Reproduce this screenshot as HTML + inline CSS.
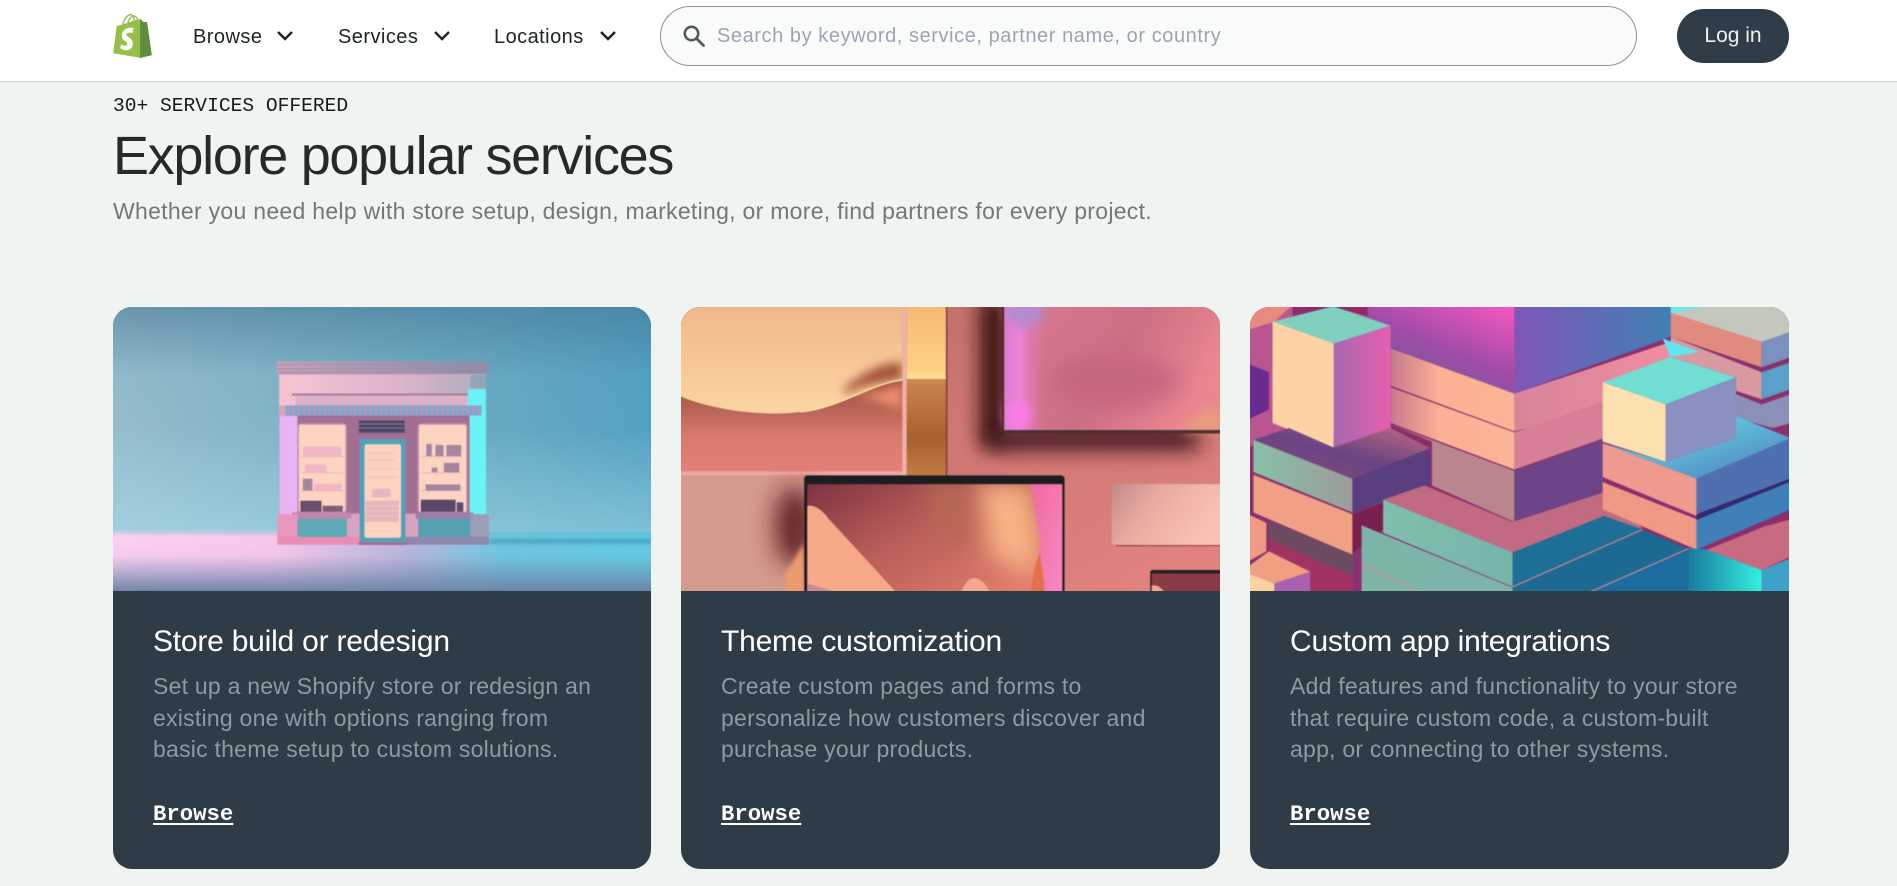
<!DOCTYPE html>
<html lang="en"><head><meta charset="utf-8"><title>Explore popular services</title>
<style>
html,body{margin:0;padding:0;width:1897px;height:886px;overflow:hidden;background:#f0f4f1;font-family:"Liberation Sans",sans-serif}
.a{position:absolute;white-space:nowrap}
#hdr{position:absolute;left:0;top:0;width:1897px;height:81px;background:#fff;border-bottom:1px solid #cfd2d0}
.nav{font-size:20px;color:#1c2428;top:25px;line-height:24px;letter-spacing:.45px}
.search{left:660px;top:6px;width:975px;height:58px;border:1px solid #8c9193;border-radius:30px;background:#f9fafa}
.ph{left:717px;top:24px;line-height:24px;font-size:20px;color:#9ea3b0;letter-spacing:.57px}
.login{left:1677px;top:9px;width:112px;height:54px;border-radius:27px;background:#2e3d48;color:#eef1f1;font-size:21px;line-height:54px;text-align:center}
.eye{left:113px;top:94px;font:19.6px/24px "Liberation Mono",monospace;color:#141c1c}
h1{margin:0;left:113px;top:122px;font-weight:400;font-size:54px;line-height:68px;letter-spacing:-1.3px;color:#222b29}
.sub{left:113px;top:197px;font-size:23px;line-height:28px;color:#71787a;letter-spacing:.29px}
.card{position:absolute;top:307px;height:562px;background:#2e3c47;border-radius:19px;overflow:hidden}
.clip{position:absolute;left:0;top:0;width:100%;height:284px;overflow:hidden}
.card svg{position:absolute;left:-2px;top:-2px;display:block;filter:blur(.5px)}
.card svg svg{filter:none}
.t{position:absolute;left:40px;top:317px;font-size:30px;line-height:36px;color:#fff;letter-spacing:-.22px;white-space:nowrap}
.d{position:absolute;left:40px;top:364px;font-size:23px;line-height:31.7px;color:#8f9aa0;white-space:nowrap;letter-spacing:.24px}
.b{position:absolute;left:40px;top:493px;font:bold 22.3px/28px "Liberation Mono",monospace;color:#fff;text-decoration:underline;text-underline-offset:3px}
</style></head><body>
<div id="hdr"></div>
<svg class="a" style="left:113px;top:14px" width="39" height="44" viewBox="0 0 109.5 124.5"><path fill="#95BF47" d="M95.9 23.9c-.1-.6-.6-1-1.1-1-.5 0-9.3-.2-9.3-.2s-7.4-7.2-8.1-7.9c-.7-.7-2.2-.5-2.7-.3 0 0-1.4.4-3.7 1.1-.4-1.3-1-2.8-1.8-4.4-2.6-5-6.5-7.7-11.1-7.7-.3 0-.6 0-1 .1-.1-.2-.3-.3-.4-.5C54.7.9 52.1-.1 49 0c-6 .2-12 4.5-16.8 12.2-3.4 5.4-6 12.2-6.7 17.5-6.9 2.1-11.7 3.6-11.8 3.7-3.5 1.1-3.6 1.2-4 4.5-.3 2.5-9.5 73-9.5 73l76.4 13.2 33.1-8.2s-13.7-92.4-13.8-93zm-28.7-7.1c-1.8.5-3.8 1.2-5.9 1.8 0-3-.4-7.3-1.8-10.9 4.6.9 6.8 6 7.7 9.1zm-10 3.1c-4 1.2-8.4 2.6-12.8 3.9 1.2-4.7 3.6-9.4 6.4-12.5 1.1-1.1 2.6-2.4 4.3-3.2 1.8 3.5 2.2 8.4 2.1 11.8zM49.1 4c1.4 0 2.6.3 3.6.9-1.6.8-3.2 2.1-4.7 3.6-3.8 4.1-6.7 10.5-7.9 16.6-3.6 1.1-7.2 2.2-10.5 3.2C31.7 18.8 39.8 4.3 49.1 4z"/><path fill="#5E8E3E" d="M94.8 22.9c-.5 0-9.3-.2-9.3-.2s-7.4-7.2-8.1-7.9c-.3-.3-.6-.4-1-.5V124.5l33.1-8.2s-13.5-92.4-13.6-93c-.1-.6-.6-.4-1.1-.4z"/><path fill="#fff" d="M58 39.9l-3.8 14.4s-4.3-2-9.4-1.6c-7.5.5-7.5 5.2-7.5 6.4.4 6.4 17.3 7.8 18.3 22.9.7 11.9-6.3 20-16.4 20.6-12.2.8-18.9-6.4-18.9-6.4l2.6-11s6.7 5.1 12.1 4.7c3.5-.2 4.8-3.1 4.7-5.1-.5-8.4-14.3-7.9-15.2-21.7-.7-11.6 6.9-23.4 23.7-24.4 6.4-.5 9.8 1.2 9.8 1.2z"/></svg>
<div class="a nav" style="left:193px">Browse</div>
<svg class="a" style="left:276px;top:30px" width="18" height="12" viewBox="0 0 18 12"><path d="M2 2l7 7 7-7" fill="none" stroke="#1c2428" stroke-width="2.4"/></svg>
<div class="a nav" style="left:338px">Services</div>
<svg class="a" style="left:433px;top:30px" width="18" height="12" viewBox="0 0 18 12"><path d="M2 2l7 7 7-7" fill="none" stroke="#1c2428" stroke-width="2.4"/></svg>
<div class="a nav" style="left:494px">Locations</div>
<svg class="a" style="left:599px;top:30px" width="18" height="12" viewBox="0 0 18 12"><path d="M2 2l7 7 7-7" fill="none" stroke="#1c2428" stroke-width="2.4"/></svg>
<div class="a search"></div>
<svg class="a" style="left:682px;top:24px" width="24" height="23" viewBox="0 0 24 23"><circle cx="9.5" cy="9.5" r="6.7" fill="none" stroke="#55595d" stroke-width="2.6"/><path d="M14.5 14.5l7 7" stroke="#55595d" stroke-width="2.8" stroke-linecap="round"/></svg>
<div class="a ph">Search by keyword, service, partner name, or country</div>
<div class="a login">Log in</div>
<div class="a eye">30+ SERVICES OFFERED</div>
<h1 class="a">Explore popular services</h1>
<div class="a sub">Whether you need help with store setup, design, marketing, or more, find partners for every project.</div>

<div class="card" style="left:113px;width:538px">
<div class="clip">
<svg width="542" height="288" viewBox="36 36 1480 852" preserveAspectRatio="none">
<defs>
<linearGradient id="a1" x1="0" x2="1" y1="0" y2="0"><stop offset="0" stop-color="#9cc3d1"/><stop offset=".5" stop-color="#79b3c8"/><stop offset="1" stop-color="#54a5c4"/></linearGradient>
<linearGradient id="a2" x1="0" x2="0" y1="0" y2="1"><stop offset="0" stop-color="#3f6f8f" stop-opacity=".55"/><stop offset=".3" stop-color="#3f6f8f" stop-opacity=".1"/><stop offset="1" stop-color="#3f6f8f" stop-opacity="0"/></linearGradient>
<linearGradient id="a3" x1="0" x2="0" y1="0" y2="1"><stop offset="0" stop-color="#a8dcea" stop-opacity="0"/><stop offset="1" stop-color="#a8dcea" stop-opacity=".5"/></linearGradient>
<linearGradient id="a4" x1="0" x2="1" y1="0" y2="0"><stop offset="0" stop-color="#fcd0f2"/><stop offset=".3" stop-color="#f8c8ec"/><stop offset=".55" stop-color="#b9b6de"/><stop offset=".72" stop-color="#70c8e2"/><stop offset="1" stop-color="#62cde4"/></linearGradient>
<linearGradient id="a5" x1="0" x2="0" y1="0" y2="1"><stop offset="0" stop-color="#6f88aa" stop-opacity="0"/><stop offset=".3" stop-color="#6f88aa" stop-opacity=".05"/><stop offset="1" stop-color="#6a82a6" stop-opacity="1"/></linearGradient>
<linearGradient id="a6" x1="0" x2="1" y1="0" y2="0"><stop offset="0" stop-color="#f5c2d4"/><stop offset=".6" stop-color="#dbb4c9"/><stop offset="1" stop-color="#b6aec0"/></linearGradient>
<linearGradient id="a8" x1="0" x2="1" y1="0" y2="0"><stop offset="0" stop-color="#c4a0b8"/><stop offset="1" stop-color="#8a8ca8"/></linearGradient>
<pattern id="aw" width="14" height="30" patternUnits="userSpaceOnUse"><rect width="14" height="30" fill="#6ab2ca"/><rect width="6" height="30" fill="#c98cc8"/></pattern>
<filter id="bl4" x="-50%" y="-200%" width="200%" height="500%"><feGaussianBlur stdDeviation="6"/></filter>
<filter id="bl20" x="-200%" y="-50%" width="500%" height="200%"><feGaussianBlur stdDeviation="24"/></filter>
<filter id="bl30" x="-50%" y="-200%" width="200%" height="500%"><feGaussianBlur stdDeviation="30"/></filter>
<filter id="bl12" x="-100%" y="-100%" width="300%" height="300%"><feGaussianBlur stdDeviation="14"/></filter>
<filter id="bl40" x="-100%" y="-100%" width="300%" height="300%"><feGaussianBlur stdDeviation="34"/></filter>
<linearGradient id="b0" x1="0" x2="1" y1="0" y2="1"><stop offset="0" stop-color="#b86b66"/><stop offset="1" stop-color="#e58480"/></linearGradient>
<linearGradient id="b1" x1="0" x2="0" y1="0" y2="1"><stop offset="0" stop-color="#efb78b"/><stop offset="1" stop-color="#fdd6a2"/></linearGradient>
<linearGradient id="b2" x1="0" x2="0" y1="0" y2="1"><stop offset=".55" stop-color="#a85a4c"/><stop offset=".78" stop-color="#d97a6d"/><stop offset="1" stop-color="#e3807a"/></linearGradient>
<linearGradient id="b3" x1="0" x2="0" y1="0" y2="1"><stop offset="0" stop-color="#f8b878"/><stop offset=".9" stop-color="#fcd283"/><stop offset="1" stop-color="#ffe09a"/></linearGradient>
<linearGradient id="b4" x1="0" x2="0" y1="0" y2="1"><stop offset="0" stop-color="#cb8750"/><stop offset=".6" stop-color="#aa602e"/><stop offset="1" stop-color="#c17a45"/></linearGradient>
<linearGradient id="b5" x1="0" x2="1" y1="0" y2=".35"><stop offset="0" stop-color="#d87a96"/><stop offset=".6" stop-color="#cc6f82"/><stop offset="1" stop-color="#e98690"/></linearGradient>
<linearGradient id="b6" x1="0" x2="1" y1="0" y2="0"><stop offset="0" stop-color="#d87ed0"/><stop offset=".07" stop-color="#ee82d8"/><stop offset=".2" stop-color="#d8749a" stop-opacity="0"/></linearGradient>
<linearGradient id="b8" x1="0" x2="1" y1="0" y2=".7"><stop offset="0" stop-color="#7e3342"/><stop offset=".45" stop-color="#b65c58"/><stop offset="1" stop-color="#e07c6c"/></linearGradient>
<linearGradient id="b9" x1="0" x2="1" y1="0" y2=".4"><stop offset="0" stop-color="#bf8a8c"/><stop offset=".4" stop-color="#e8aaa0"/><stop offset="1" stop-color="#fbc2b3"/></linearGradient>
<linearGradient id="b10" x1="0" x2="1" y1="0" y2="1"><stop offset="0" stop-color="#f06aa0"/><stop offset="1" stop-color="#f888c0"/></linearGradient>
<linearGradient id="c1" x1="1" x2=".3" y1="0" y2="1"><stop offset="0" stop-color="#f858c0"/><stop offset=".55" stop-color="#a04ca8"/><stop offset="1" stop-color="#6c5c90"/></linearGradient>
<linearGradient id="c2" x1="0" x2="1" y1="0" y2="0"><stop offset="0" stop-color="#8156b8"/><stop offset="1" stop-color="#3f80b4"/></linearGradient>
<linearGradient id="c3" x1="0" x2="1" y1="0" y2="0"><stop offset="0" stop-color="#c77a8c"/><stop offset=".4" stop-color="#fdb095"/><stop offset="1" stop-color="#fab496"/></linearGradient>
<linearGradient id="c4" x1="0" x2="1" y1="0" y2="0"><stop offset="0" stop-color="#d8849a"/><stop offset="1" stop-color="#ee8e9e"/></linearGradient>
<linearGradient id="c5" x1="0" x2="1" y1="0" y2="0"><stop offset="0" stop-color="#a868b0"/><stop offset="1" stop-color="#e560ae"/></linearGradient>
<linearGradient id="c6" x1="0" x2="1" y1="1" y2="0"><stop offset="0" stop-color="#8a4a78"/><stop offset=".5" stop-color="#6a4484"/><stop offset="1" stop-color="#c26a80"/></linearGradient>
<linearGradient id="c7" x1="0" x2="1" y1="0" y2="0"><stop offset="0" stop-color="#88c0a8"/><stop offset="1" stop-color="#9c9c98"/></linearGradient>
<linearGradient id="c8" x1="0" x2="1" y1="0" y2="1"><stop offset="0" stop-color="#74dcd0"/><stop offset="1" stop-color="#6ee0d4"/></linearGradient>
<linearGradient id="c9" x1="0" x2="1" y1="0" y2="1"><stop offset="0" stop-color="#5ce8f0"/><stop offset=".5" stop-color="#5cb4d4"/><stop offset="1" stop-color="#4f78bc"/></linearGradient>
<linearGradient id="c11" x1="0" x2="1" y1="0" y2="0"><stop offset="0" stop-color="#1a7aa0"/><stop offset="1" stop-color="#34f0e0"/></linearGradient>
<linearGradient id="c12" x1="0" x2="1" y1="0" y2="0"><stop offset="0" stop-color="#7fbfae"/><stop offset="1" stop-color="#78b4a8"/></linearGradient>
</defs>
<rect x="36" y="36" width="1480" height="852" fill="url(#a1)"/>
<rect x="36" y="36" width="1480" height="700" fill="url(#a2)"/>
<rect x="36" y="400" width="1480" height="310" fill="url(#a3)"/>
<rect x="36" y="710" width="1480" height="178" fill="url(#a4)" filter="url(#bl4)"/>
<rect x="36" y="722" width="1480" height="166" fill="url(#a4)"/>
<rect x="36" y="730" width="1480" height="158" fill="url(#a5)"/>
<rect x="1068" y="730" width="448" height="10" fill="#3a94b0" filter="url(#bl4)"/>
<rect x="495" y="240" width="565" height="505" fill="#d8a3c0"/>
<rect x="488" y="203" width="580" height="37" fill="url(#a8)"/>
<path d="M488 212H1068M490 225H1066M492 236H1064" stroke="#9f8ca5" stroke-width="2"/>
<rect x="495" y="243" width="46" height="90" fill="#f5c2cf"/><rect x="1017" y="243" width="43" height="40" fill="#8fa6b8"/>
<rect x="540" y="243" width="477" height="56" fill="url(#a6)"/>
<rect x="530" y="298" width="490" height="6" fill="#a77a9b"/>
<rect x="540" y="304" width="477" height="30" fill="#dcb2c6"/>
<rect x="497" y="365" width="50" height="290" fill="#e8b4f5"/>
<rect x="1010" y="285" width="50" height="370" fill="#6cf2f5"/>
<rect x="513" y="333" width="535" height="30" fill="url(#aw)"/>
<rect x="545" y="363" width="470" height="290" fill="#a26f93"/>
<rect x="713" y="378" width="125" height="36" fill="#4b4668"/><path d="M713 388H838M713 400H838" stroke="#8a7c98" stroke-width="3"/>
<rect x="547" y="388" width="131" height="262" rx="8" fill="#fdd3c2" stroke="#c98ba8" stroke-width="4"/>
<rect x="875" y="388" width="133" height="262" rx="8" fill="#fdd3c2" stroke="#c98ba8" stroke-width="4"/>
<path d="M555 484H672M555 532H672M555 585H672M882 484H995M882 532H995M882 585H995" stroke="#eeb4b4" stroke-width="3"/>
<g fill="#f2b6c4"><rect x="560" y="455" width="105" height="28"/><rect x="565" y="508" width="60" height="22"/><rect x="590" y="565" width="75" height="20"/></g>
<g fill="#a5859f"><rect x="897" y="447" width="15" height="36"/><rect x="922" y="450" width="22" height="33"/><rect x="952" y="450" width="40" height="33"/><rect x="945" y="503" width="42" height="28"/><rect x="912" y="517" width="15" height="14"/><rect x="560" y="550" width="26" height="35"/><rect x="895" y="567" width="95" height="18"/></g>
<rect x="553" y="615" width="58" height="33" fill="#6a506f"/><rect x="614" y="630" width="55" height="18" fill="#7d5e7e"/>
<rect x="882" y="612" width="95" height="36" fill="#5a4868"/><rect x="980" y="620" width="18" height="28" fill="#62486a"/>
<rect x="715" y="432" width="125" height="306" fill="#4fa2ba"/>
<rect x="728" y="448" width="100" height="277" rx="6" fill="#fdd2c0"/>
<path d="M735 475H810M735 495H810M733 520H820M733 545H820" stroke="#f5bcbc" stroke-width="3"/>
<rect x="750" y="580" width="50" height="25" fill="#e6b8be"/>
<rect x="730" y="615" width="92" height="62" fill="#e5b6bb"/><path d="M730 630H822M730 645H822M730 660H822" stroke="#f5cccb" stroke-width="2"/>
<rect x="530" y="650" width="162" height="18" fill="#c387ae"/><rect x="868" y="650" width="157" height="18" fill="#9c7ea8"/>
<rect x="545" y="668" width="135" height="55" fill="#5fa9b4"/><rect x="875" y="668" width="143" height="55" fill="#55a0b0"/>
<rect x="490" y="655" width="55" height="70" fill="#e796bc"/><rect x="1018" y="655" width="50" height="70" fill="#9c9cb8"/>
<rect x="490" y="722" width="225" height="23" fill="#ea8cb6"/><rect x="840" y="722" width="228" height="23" fill="#8c88ae"/>
<rect x="712" y="738" width="132" height="8" fill="#b0668e"/>
</svg>
</div>
<div class="t">Store build or redesign</div>
<div class="d">Set up a new Shopify store or redesign an<br>existing one with options ranging from<br>basic theme setup to custom solutions.</div>
<div class="b">Browse</div>
</div>

<div class="card" style="left:681px;width:539px">
<div class="clip">
<svg width="543" height="288" viewBox="30 36 1483 852" preserveAspectRatio="none">
<rect x="30" y="36" width="1483" height="852" fill="url(#b0)"/>
<rect x="850" y="20" width="75" height="440" fill="#3f1418" filter="url(#bl20)"/>
<rect x="890" y="395" width="560" height="70" fill="#3f161c" filter="url(#bl30)"/>
<rect x="30" y="36" width="610" height="495" fill="url(#b2)"/>
<path d="M500 300Q590 300 640 270V345Q580 320 500 300Z" fill="#f0906e" filter="url(#bl12)"/>
<path d="M30 305C140 355 300 370 400 345C500 325 580 260 640 258V36H30Z" fill="url(#b1)"/>
<path d="M480 285Q560 205 640 205V258Q560 262 480 300Z" fill="#a4523a" filter="url(#bl12)"/>
<path d="M360 352C460 345 560 265 640 258" fill="none" stroke="#ffe3ac" stroke-width="4"/>
<rect x="30" y="528" width="620" height="12" fill="#f2a6a0"/>
<rect x="640" y="36" width="12" height="504" fill="#eeb2a8"/>
<rect x="652" y="36" width="108" height="219" fill="url(#b3)"/>
<rect x="652" y="255" width="108" height="285" fill="url(#b4)"/>
<rect x="759" y="36" width="4" height="504" fill="#7e3c30"/>
<rect x="918" y="36" width="595" height="372" fill="url(#b5)"/>
<ellipse cx="1220" cy="260" rx="180" ry="80" fill="#c66680" filter="url(#bl40)"/>
<rect x="918" y="36" width="595" height="372" fill="url(#b6)"/>
<ellipse cx="975" cy="60" rx="50" ry="40" fill="#b48ad0" filter="url(#bl12)"/>
<ellipse cx="955" cy="360" rx="35" ry="40" fill="#fa7ce8" filter="url(#bl12)"/>
<rect x="912" y="36" width="6" height="372" fill="#5a2a30"/>
<path d="M1400 408Q1470 330 1513 340V408Z" fill="#e8a17c" filter="url(#bl12)" opacity=".9"/>
<rect x="918" y="406" width="595" height="10" fill="#4a3036"/>
<rect x="30" y="540" width="342" height="348" fill="#d49a8c"/>
<ellipse cx="345" cy="690" rx="50" ry="120" fill="#5e1f24" filter="url(#bl40)"/>
<path d="M320 830Q345 790 372 740V888H320Z" fill="#ee9a6e" filter="url(#bl4)"/>
<rect x="372" y="540" width="711" height="348" rx="10" fill="#1d1d20"/>
<svg x="380" y="566" width="697" height="322" viewBox="380 566 697 322" preserveAspectRatio="none">
<rect x="380" y="566" width="697" height="322" fill="url(#b8)"/>
<path d="M840 566H990L1018 740L1000 840L880 780Z" fill="#f6b284" filter="url(#bl40)"/>
<path d="M700 566H800L830 720L760 720Z" fill="#b56a50" filter="url(#bl40)"/>
<path d="M990 566H1077V888H1010Q1000 800 1018 740Z" fill="url(#b10)"/>
<path d="M380 630Q410 625 440 670L625 888H380Z" fill="#f5a988"/>
<path d="M380 860L470 888H380Z" fill="#c88b90"/>
<path d="M800 888Q820 830 850 848Q870 860 880 888Z" fill="#f2a88e"/>
<path d="M990 888Q1000 800 1016 770L1030 888Z" fill="#e4704a"/>
</svg>
<rect x="1212" y="566" width="310" height="181" rx="10" fill="url(#b9)"/>
<path d="M1222 748H1520" stroke="#7b3c40" stroke-width="3"/>
<rect x="1317" y="820" width="210" height="80" rx="6" fill="#231f22"/>
<rect x="1321" y="830" width="200" height="60" fill="#8a3a44"/>
<path d="M1321 866Q1340 860 1358 888H1321Z" fill="#f2a586"/>
</svg>
</div>
<div class="t">Theme customization</div>
<div class="d">Create custom pages and forms to<br>personalize how customers discover and<br>purchase your products.</div>
<div class="b">Browse</div>
</div>

<div class="card" style="left:1250px;width:539px">
<div class="clip">
<svg width="543" height="288" viewBox="28 36 1482 852" preserveAspectRatio="none">
<rect x="28" y="36" width="1482" height="852" fill="#8a2f6e"/>
<polygon points="28,36 355,36 355,120 418,165 418,420 95,420 28,460" fill="#b9558f"/>
<polygon points="28,36 150,36 100,85 28,110" fill="#e88a80"/>
<polygon points="150,36 355,36 355,70 260,40 150,70" fill="#8f2a68"/>
<polygon points="28,210 85,235 85,345 28,375" fill="#6a2a90"/>
<polygon points="355,36 755,36 755,298 418,165 355,120" fill="url(#c1)"/>
<polygon points="755,36 1182,36 1182,130 755,298" fill="url(#c2)"/>
<polygon points="418,165 755,298 755,410 418,275" fill="url(#c3)"/>
<polygon points="755,298 1182,145 1182,290 755,410" fill="url(#c4)"/>
<polygon points="418,280 755,413 755,523 418,385" fill="url(#c3)"/>
<polygon points="755,413 1000,320 1000,430 755,523" fill="#d77f96"/>
<polygon points="418,390 530,440 530,570 755,678 755,527" fill="#b9868e"/>
<polygon points="755,527 1000,432 1000,590 755,678" fill="#6e4488"/>
<polygon points="95,85 260,40 417,97 262,150" fill="#7fd0bf"/>
<polygon points="95,85 262,150 262,458 95,385" fill="#fdd3a6"/>
<polygon points="262,150 417,97 417,400 262,458" fill="url(#c5)"/>
<polygon points="43,435 140,400 262,458 417,400 525,460 313,550" fill="url(#c6)"/>
<polygon points="43,435 313,550 313,650 43,530" fill="url(#c7)"/>
<polygon points="313,550 525,460 525,570 313,650" fill="#5a3f7f"/>
<polygon points="43,538 313,655 313,775 43,650" fill="#f0a084"/>
<polygon points="313,655 525,570 395,640 395,700 313,770" fill="#7a2050"/>
<polygon points="85,675 315,775 315,838 85,730" fill="#6c4a62"/>
<polygon points="85,730 315,838 315,888 195,888 85,800" fill="#a23262"/>
<polygon points="28,655 78,680 78,765 28,795" fill="#f09a85"/>
<polygon points="28,810 85,765 198,825 100,860 28,830" fill="#f0a080"/>
<polygon points="28,830 100,860 100,888 28,888" fill="#fdd0a2"/>
<polygon points="100,860 198,825 198,888 100,888" fill="#a860b0"/>
<polygon points="397,612 510,570 750,678 1000,590 1105,695 750,768" fill="#c26a82"/>
<polygon points="397,612 750,768 750,870 397,710" fill="url(#c12)"/>
<polygon points="750,768 1000,660 1105,700 750,870" fill="#1e6f96"/>
<polygon points="338,688 750,872 750,888 505,888 338,808" fill="#7cb5a8"/>
<polygon points="338,808 505,888 338,888" fill="#7cb5a8"/>
<polygon points="750,872 1105,702 1230,757 950,888 750,888" fill="#1c6a92"/>
<polygon points="950,888 1230,760 1230,888" fill="#1b6da0"/>
<path d="M338 805L505 888M750 870L1105 700M955 888L1230 757" stroke="#e88a9a" stroke-width="3" fill="none"/>
<polygon points="1182,36 1510,36 1510,115 1430,145 1182,60" fill="#c4c8bc"/>
<polygon points="1182,36 1300,36 1182,60" fill="#70e6f0"/>
<polygon points="1182,60 1430,145 1430,220 1182,130" fill="#e08a80"/>
<polygon points="1430,145 1510,115 1510,190 1430,220" fill="#7a90c0"/>
<polygon points="1182,130 1430,235 1430,315 1360,290 1360,250 1180,190" fill="#d89aa0"/>
<polygon points="1160,135 1260,175 1180,190" fill="#62e4f2"/>
<polygon points="1430,235 1510,205 1510,285 1430,315" fill="#5aa0c8"/>
<polygon points="1360,300 1430,330 1510,300 1510,385 1460,400 1360,370" fill="#8a90b8"/>
<polygon points="996,265 1180,190 1360,250 1168,330" fill="url(#c8)"/>
<polygon points="996,265 1168,330 1168,500 996,440" fill="#fde0b0"/>
<polygon points="1168,330 1360,250 1360,430 1168,500" fill="#8a90c0"/>
<polygon points="996,445 1168,500 1360,430 1360,365 1510,430 1252,550" fill="url(#c9)"/>
<polygon points="996,445 1252,550 1252,660 996,545" fill="#ee9a8e"/>
<polygon points="1252,550 1510,430 1510,550 1252,660" fill="#4f70b0"/>
<polygon points="996,560 1252,670 1252,760 996,640" fill="#f09a85"/>
<polygon points="1252,670 1510,555 1510,640 1252,760" fill="#3f80b8"/>
<polygon points="1252,655 1510,548 1510,558 1252,672" fill="#342a70"/>
<polygon points="1280,760 1440,690 1510,670 1510,780 1430,820" fill="#c86a80"/>
<polygon points="1230,755 1280,760 1430,820 1430,888 1230,888" fill="url(#c11)"/>
<polygon points="1430,820 1510,785 1510,888 1430,888" fill="#3fa0c8"/>
</svg>
</div>
<div class="t">Custom app integrations</div>
<div class="d">Add features and functionality to your store<br>that require custom code, a custom-built<br>app, or connecting to other systems.</div>
<div class="b">Browse</div>
</div>
</body></html>
